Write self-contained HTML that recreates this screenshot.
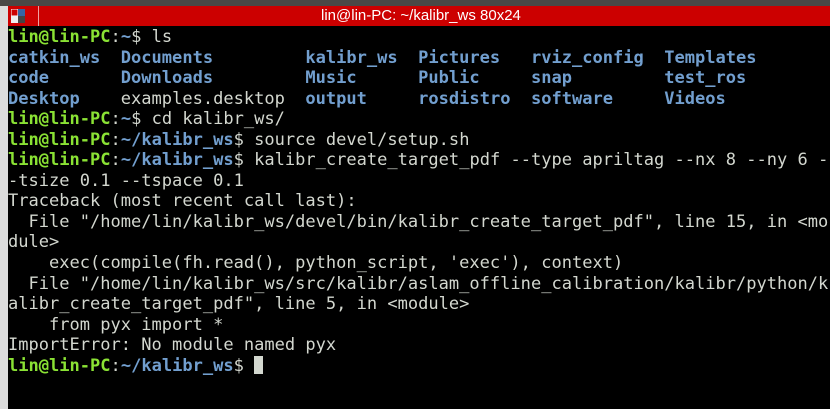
<!DOCTYPE html>
<html><head><style>
html,body{margin:0;padding:0;width:830px;height:409px;overflow:hidden;background:#000;}
.top{position:absolute;left:0;top:0;width:830px;height:6px;background:#4a4846;}
.left{position:absolute;left:0;top:6px;width:8px;height:403px;background:#dcdcdc;}
.title{position:absolute;left:8px;top:6px;width:822px;height:20px;background:#cc0000;color:#fff;font:15px "Liberation Sans",sans-serif;line-height:20px;}
.title span{position:absolute;left:313px;top:0;}
.ico{position:absolute;left:3px;top:3px;width:14px;height:14px;}
.sep{position:absolute;left:30px;top:0;width:1px;height:20px;background:#f0a0a0;}
pre{position:absolute;left:8px;top:27px;margin:0;font:17.05px "DejaVu Sans Mono","Liberation Mono",monospace;line-height:20.55px;color:#d3d7cf;white-space:pre;}
.g{color:#8ae234;font-weight:bold;}
.b{color:#729fcf;font-weight:bold;}
.c{display:inline-block;width:9px;height:18px;background:#d3d7cf;vertical-align:-3px;}
</style></head><body>
<div class="top"></div><div class="left"></div>
<div class="title"><div class="ico"><svg width="14" height="14"><rect x="0" y="0" width="7" height="7" fill="#cc0000" stroke="#fff"/><rect x="7" y="0" width="7" height="7" fill="#3465a4"/><rect x="0" y="7" width="7" height="7" fill="#eee"/><rect x="7" y="7" width="7" height="7" fill="#444"/></svg></div><div class="sep"></div><span>lin@lin-PC: ~/kalibr_ws 80x24</span></div>
<pre><span class="g">lin@lin-PC</span>:<span class="b">~</span>$ ls
<span class="b">catkin_ws  Documents         kalibr_ws  Pictures   rviz_config  Templates</span>
<span class="b">code       Downloads         Music      Public     snap         test_ros</span>
<span class="b">Desktop</span>    examples.desktop  <span class="b">output     rosdistro  software     Videos</span>
<span class="g">lin@lin-PC</span>:<span class="b">~</span>$ cd kalibr_ws/
<span class="g">lin@lin-PC</span>:<span class="b">~/kalibr_ws</span>$ source devel/setup.sh
<span class="g">lin@lin-PC</span>:<span class="b">~/kalibr_ws</span>$ kalibr_create_target_pdf --type apriltag --nx 8 --ny 6 -
-tsize 0.1 --tspace 0.1
Traceback (most recent call last):
  File "/home/lin/kalibr_ws/devel/bin/kalibr_create_target_pdf", line 15, in &lt;mo
dule&gt;
    exec(compile(fh.read(), python_script, 'exec'), context)
  File "/home/lin/kalibr_ws/src/kalibr/aslam_offline_calibration/kalibr/python/k
alibr_create_target_pdf", line 5, in &lt;module&gt;
    from pyx import *
ImportError: No module named pyx
<span class="g">lin@lin-PC</span>:<span class="b">~/kalibr_ws</span>$ <span class="c"></span></pre>
</body></html>
